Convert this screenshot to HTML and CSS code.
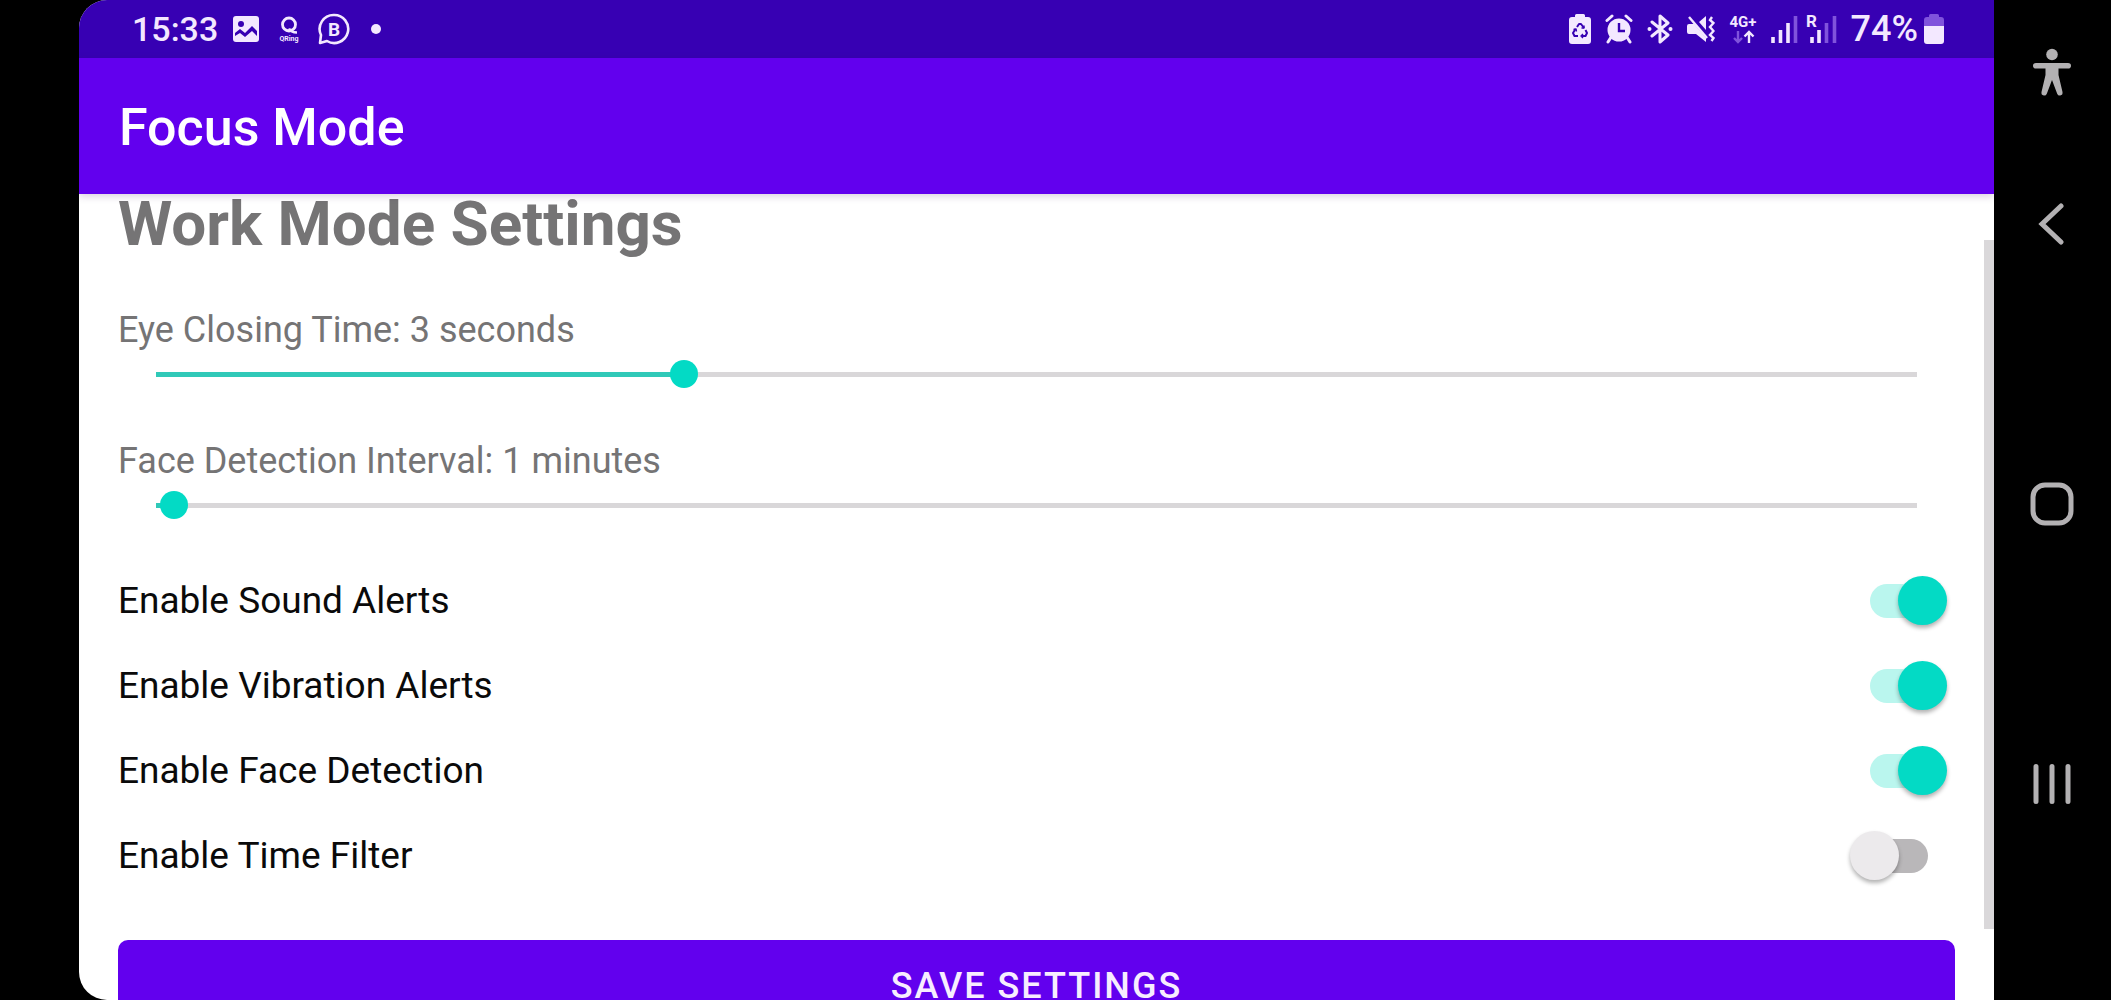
FILE: index.html
```html
<!DOCTYPE html>
<html lang="en">
<head>
<meta charset="utf-8">
<meta name="viewport" content="width=device-width, initial-scale=1">
<title>Focus Mode</title>
<link rel="stylesheet" href="styles.css">
</head>
<body>
<div class="device">
  <div class="screen">
    <div class="status-bar">
      <div class="status-group">
        <span class="clock">15:33</span>
        <div class="notifications">
          <svg width="28" height="28" viewBox="0 0 28 28" aria-hidden="true">
            <rect x="1" y="1" width="26" height="26" rx="3" fill="currentColor"/>
            <circle cx="9" cy="9" r="3" fill="#3700b3"/>
            <path d="M3 21v-3l5-4 5 4 7-7 5 5v5l-5-5-7 6-5-4z" fill="#3700b3"/>
          </svg>
          <svg width="22" height="28" viewBox="0 0 22 28" aria-hidden="true">
            <circle cx="11" cy="9.500" r="6.500" fill="none" stroke="currentColor" stroke-width="2.800"/>
            <path d="M11 13.500q2 4 8 4" fill="none" stroke="currentColor" stroke-width="2.600"/>
            <text x="11" y="26" class="ring-text" text-anchor="middle">QRing</text>
          </svg>
          <svg width="32" height="32" viewBox="0 0 32 32" aria-hidden="true">
            <path d="M16 2a14 14 0 1 1-7 26L2 30l1-8A14 14 0 0 1 16 2z" fill="none" stroke="currentColor" stroke-width="2.600" stroke-linejoin="round"/>
            <text x="16" y="23" class="badge-text" text-anchor="middle">B</text>
          </svg>
          <svg width="16" height="16" viewBox="0 0 16 16" aria-hidden="true"><circle cx="8" cy="8" r="5" fill="currentColor"/></svg>
        </div>
      </div>
      <div class="system">
        <svg width="22" height="30" viewBox="0 0 22 30" aria-hidden="true">
          <path d="M6 3V1.500Q6 0 7.500 0h7Q16 0 16 1.500V3h3q3 0 3 3v21q0 3-3 3H3q-3 0-3-3V6q0-3 3-3z" fill="currentColor"/>
          <g fill="none" stroke="#3700b3" stroke-width="2" stroke-linejoin="round">
            <path d="M8 13l2-3h2l3 4M16.500 16l1.500 3-1.500 3h-4M9 22H5.500L4 19l2.500-4"/>
            <path d="M12.500 14H15v-2.500M14 20l-2 2 2 2M4.500 15.500L7 15l.5 2.500" stroke-width="1.400"/>
          </g>
        </svg>
        <svg width="28" height="30" viewBox="0 0 28 30" aria-hidden="true">
          <circle cx="14" cy="16" r="11.500" fill="currentColor"/>
          <path d="M2 6.500L7 2M26 6.500L21 2M5.500 24L3 28M22.500 24l2.500 4" stroke="currentColor" stroke-width="3" stroke-linecap="round"/>
          <path d="M14 9v8h6" fill="none" stroke="#3700b3" stroke-width="2.400"/>
        </svg>
        <svg width="26" height="30" viewBox="0 0 26 30" aria-hidden="true">
          <path d="M5 8l16 13-8 7V2l8 7L5 22" fill="none" stroke="currentColor" stroke-width="3" stroke-linejoin="round" stroke-linecap="round"/>
          <circle cx="2.500" cy="15" r="2" fill="currentColor"/><circle cx="23.500" cy="15" r="2" fill="currentColor"/>
        </svg>
        <svg width="28" height="30" viewBox="0 0 28 30" aria-hidden="true">
          <path d="M2 10h5l12 14v4L9 20H2q-2 0-2-2v-6q0-2 2-2zM12 8l7-6v14z" fill="currentColor"/>
          <path d="M2 3l18 21" stroke="currentColor" stroke-width="2.400"/>
          <path d="M25 3l-2 3 3.500 3-3.500 4 3.500 4-3.500 4 3.500 3-2 3" fill="none" stroke="currentColor" stroke-width="2.400"/>
        </svg>
        <svg width="28" height="30" viewBox="0 0 28 30" aria-hidden="true">
          <text x="14" y="13" class="network-text" text-anchor="middle">4G+</text>
          <path d="M9 17v11M5 24l4 4 4-4" fill="none" stroke="#8053dc" stroke-width="2.400"/>
          <path d="M20 29V18M15.500 22.500L20 18l4.500 4.500" fill="none" stroke="currentColor" stroke-width="2.400"/>
        </svg>
        <svg width="66" height="30" viewBox="0 0 66 30" aria-hidden="true">
          <path d="M2 23v6M9.500 16v13M17 9v20M41 23v6M48 16v13" stroke="currentColor" stroke-width="3.600"/>
          <path d="M24.500 2v27M55.500 9v20M63.500 2v27" stroke="#8053dc" stroke-width="3.600"/>
          <text x="35" y="13" class="roaming-text">R</text>
        </svg>
        <div class="battery">
          <span class="battery-level">74%</span>
          <svg width="20" height="30" viewBox="0 0 20 30" aria-hidden="true">
            <path d="M5 3V1.500Q5 0 6.500 0h7Q15 0 15 1.500V3h2q3 0 3 3v6H0V6q0-3 3-3z" fill="#8053dc"/>
            <path d="M0 12h20v15q0 3-3 3H3q-3 0-3-3z" fill="currentColor"/>
          </svg>
        </div>
      </div>
    </div>

    <header class="app-bar"><h1 class="app-title">Focus Mode</h1></header>

    <main class="content">
      <form class="settings">
        <h2 class="section-title">Work Mode Settings</h2>
        <div class="sliders">
          <div class="slider-field">
            <label class="slider-label" for="eye">Eye Closing Time: 3 seconds</label>
            <input class="slider" id="eye" type="range" min="0" max="10" value="3" style="--fill:0.3">
          </div>
          <div class="slider-field">
            <label class="slider-label" for="face">Face Detection Interval: 1 minutes</label>
            <input class="slider" id="face" type="range" min="0" max="100" value="1" style="--fill:0.01">
          </div>
        </div>
        <div class="switches">
          <label class="switch-row">Enable Sound Alerts<input class="switch" type="checkbox" role="switch" checked></label>
          <label class="switch-row">Enable Vibration Alerts<input class="switch" type="checkbox" role="switch" checked></label>
          <label class="switch-row">Enable Face Detection<input class="switch" type="checkbox" role="switch" checked></label>
          <label class="switch-row">Enable Time Filter<input class="switch" type="checkbox" role="switch"></label>
        </div>
        <button class="save" type="button">SAVE SETTINGS</button>
      </form>
      <div class="scroll-thumb"></div>
    </main>
  </div>

  <nav class="nav-bar" aria-label="System navigation">
    <button class="nav-button" type="button" aria-label="Accessibility">
      <svg width="40" height="48" viewBox="0 0 40 48">
        <circle cx="20" cy="6.500" r="5.800" fill="currentColor"/>
        <path d="M4 15h32q3 0 3 2.800t-3 2.800h-9.500V27l4 17q.5 3-2.300 3.500-2.200.3-3-1.800L20 32l-5.200 13.700q-.8 2.100-3 1.800Q9 47 9.500 44l4-17v-6.400H4q-3 0-3-2.800T4 15z" fill="currentColor"/>
      </svg>
    </button>
    <div class="nav-main">
      <button class="nav-button" type="button" aria-label="Back">
        <svg width="28" height="42" viewBox="0 0 28 42"><path d="M23 3L4 21l19 18" fill="none" stroke="currentColor" stroke-width="5" stroke-linecap="round" stroke-linejoin="miter"/></svg>
      </button>
      <button class="nav-button" type="button" aria-label="Home">
        <svg width="44" height="44" viewBox="0 0 44 44"><rect x="3" y="3" width="38" height="38" rx="12" fill="none" stroke="currentColor" stroke-width="5"/></svg>
      </button>
      <button class="nav-button" type="button" aria-label="Recent apps">
        <svg width="40" height="42" viewBox="0 0 40 42"><path d="M4 3.500v35M20 3.500v35M36 3.500v35" stroke="currentColor" stroke-width="5" stroke-linecap="round"/></svg>
      </button>
    </div>
  </nav>
</div>
</body>
</html>
```
FILE: styles.css
```css
:root {
  --primary: #6200ee;
  --primary-dark: #3700b3;
  --accent: #03dac5;
  --muted: #757475;
}

* { box-sizing: border-box; }

body {
  margin: 0;
  background: #000;
  font-family: Roboto, "Noto Sans", sans-serif;
  font-size: 36px;
  line-height: 44px;
}

svg { display: block; flex: none; }

.device {
  display: flex;
  height: 100vh;
  padding-left: 79px;
  overflow: hidden;
}

.screen {
  flex: 1;
  min-width: 0;
  display: flex;
  flex-direction: column;
  background: #fff;
  border-radius: 28px 0 0 28px;
  overflow: hidden;
}

/* Status bar */
.status-bar {
  flex: none;
  display: flex;
  align-items: center;
  justify-content: space-between;
  height: 58px;
  padding: 0 50px 0 53px;
  background: var(--primary-dark);
  color: #f3e8ff;
}

.status-group,
.notifications,
.system,
.battery {
  display: flex;
  align-items: center;
}

.status-group,
.system { gap: 14px; }
.notifications { gap: 18px; }
.battery { gap: 6px; }

.clock {
  font-size: 34px;
  font-weight: 500;
}

.battery-level { font-weight: 500; }

.ring-text,
.badge-text,
.network-text,
.roaming-text {
  fill: currentColor;
  font-weight: 700;
}

.ring-text { font-size: 7px; }
.badge-text { font-size: 19px; }
.network-text { font-size: 15px; }
.roaming-text { font-size: 17px; }

/* App bar */
.app-bar {
  flex: none;
  display: flex;
  align-items: center;
  height: 136px;
  padding: 4px 40px 0;
  background: var(--primary);
  color: #fff;
  box-shadow: 0 2px 8px rgba(60, 0, 90, 0.2);
  z-index: 1;
}

.app-title {
  margin: 0;
  font-size: 52px;
  font-weight: 500;
  line-height: 64px;
}

/* Settings */
.content {
  position: relative;
  flex: 1;
  min-height: 0;
  overflow: hidden;
}

.settings {
  display: flex;
  flex-direction: column;
  padding: 0 39px 40px;
}

.section-title {
  margin: 0 0 54px;
  color: var(--muted);
  font-size: 62px;
  font-weight: 700;
  line-height: 60px;
}

.sliders {
  display: flex;
  flex-direction: column;
  gap: 43px;
}

.slider-field {
  display: flex;
  flex-direction: column;
}

.slider-label { color: var(--muted); }

.slider {
  appearance: none;
  height: 44px;
  margin: 0 24px;
  background:
    linear-gradient(#30c9b8, #30c9b8) 14px center / calc((100% - 28px) * var(--fill)) 5px no-repeat,
    linear-gradient(#d9d7d9, #d9d7d9) center / calc(100% - 28px) 5px no-repeat;
}

.slider::-webkit-slider-thumb {
  appearance: none;
  width: 28px;
  height: 28px;
  border-radius: 50%;
  background: var(--accent);
}

.switches {
  display: flex;
  flex-direction: column;
  margin: 31px 0 42px;
}

.switch-row {
  display: flex;
  align-items: center;
  justify-content: space-between;
  height: 85px;
  padding-right: 8px;
  color: #0a0a0a;
  font-size: 37px;
}

.switch {
  appearance: none;
  display: grid;
  align-items: center;
  width: 97px;
  height: 49px;
  margin: 0;
}

.switch::before,
.switch::after {
  content: "";
  grid-area: 1 / 1;
}

.switch::before {
  justify-self: center;
  width: 58px;
  height: 34px;
  border-radius: 17px;
  background: #b9b7b9;
}

.switch::after {
  justify-self: start;
  width: 49px;
  height: 49px;
  border-radius: 50%;
  background: #eceaec;
  box-shadow: 0 3px 4px rgba(0, 0, 0, 0.3);
}

.switch:checked::before { background: #baf6ee; }

.switch:checked::after {
  justify-self: end;
  background: var(--accent);
}

.save {
  height: 92px;
  padding: 0;
  border: 0;
  border-radius: 10px;
  background: var(--primary);
  color: #f8edff;
  font: 500 36px/44px Roboto, "Noto Sans", sans-serif;
  letter-spacing: 2px;
}

.scroll-thumb {
  position: absolute;
  top: 46px;
  right: 0;
  bottom: 71px;
  width: 10px;
  background: #dad8da;
}

/* Navigation bar */
.nav-bar {
  flex: none;
  display: flex;
  flex-direction: column;
  gap: 107px;
  width: 117px;
  padding: 48px 2px 195px 0;
  color: #b3b1b3;
}

.nav-main {
  flex: 1;
  display: flex;
  flex-direction: column;
  justify-content: space-between;
}

.nav-button {
  display: flex;
  justify-content: center;
  padding: 0;
  border: 0;
  background: none;
  color: inherit;
}
```
